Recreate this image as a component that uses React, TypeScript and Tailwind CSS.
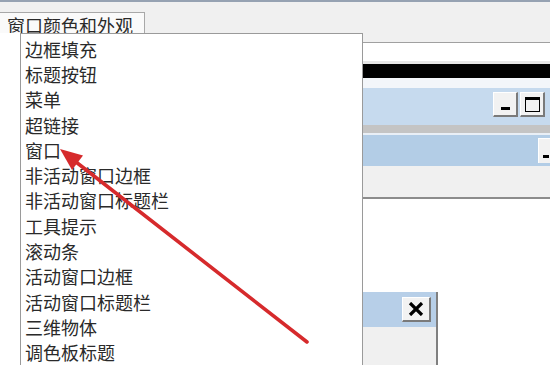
import React from "react";

const items = [
  "边框填充",
  "标题按钮",
  "菜单",
  "超链接",
  "窗口",
  "非活动窗口边框",
  "非活动窗口标题栏",
  "工具提示",
  "滚动条",
  "活动窗口边框",
  "活动窗口标题栏",
  "三维物体",
  "调色板标题",
];

function Btn({ children, w = "w-[25px]" }: { children: React.ReactNode; w?: string }) {
  return (
    <div
      className={`${w} h-[25px] bg-[#f2f2f2] border-t border-l border-t-white border-l-white border-r-2 border-b-2 border-r-[#7a7a7a] border-b-[#7a7a7a] flex items-center justify-center`}
    >
      {children}
    </div>
  );
}

export default function App() {
  return (
    <div className="relative w-[550px] h-[365px] overflow-hidden bg-white font-['Noto_Sans_CJK_SC','Microsoft_YaHei',sans-serif] text-[#2a2a2a]">
      {/* top frame line */}
      <div className="h-[2px] bg-[#96a2b2]" />
      {/* tab strip */}
      <div className="h-[31px] bg-[#f0f0f0] pt-[10px]">
        <div className="w-[145px] h-[21px] bg-[#fafafa] border-t border-r border-[#a8a8a8] pl-[7px] pt-[4px] text-[18px] leading-[16px] whitespace-nowrap overflow-visible">
          窗口颜色和外观
        </div>
      </div>
      {/* body */}
      <div className="relative flex h-[332px]">
        <div className="w-[20px] bg-white" />
        {/* dropdown list */}
        <div className="w-[343px] bg-white border-t border-l border-r border-[#9a9a9a] pt-[2px] pl-[4px]">
          {items.map((t) => (
            <div key={t} className="h-[25.3px] flex items-center text-[18px] leading-[18px] whitespace-nowrap">
              {t}
            </div>
          ))}
        </div>
        {/* preview area */}
        <div className="flex-1 flex flex-col">
          <div className="h-[9px] bg-[#f0f0f0]" />
          <div className="h-[1px] bg-[#a0a0a0]" />
          <div className="h-[18px] bg-white" />
          <div className="h-[3px] bg-[#e6e6e6]" />
          <div className="h-[14px] bg-black" />
          <div className="h-[10px] bg-[#f3f6fa]" />
          <div className="h-[37px] bg-[#c6daee] flex items-center justify-end gap-[2px] pr-[5px] pb-[4px]">
            <Btn>
              <div className="w-[9px] h-[3px] bg-black mt-[9px]" />
            </Btn>
            <Btn>
              <div className="w-[15px] h-[15px] border border-t-[3px] border-black" />
            </Btn>
          </div>
          <div className="h-[8px] bg-[#c4c4c4]" />
          <div className="h-[2px] bg-[#e9eff6]" />
          <div className="h-[31px] bg-[#b3cde6] flex items-center justify-end">
            <div className="w-[12px] h-[25px] bg-[#f2f2f2] border-t border-l border-t-white border-l-white flex items-end pb-[5px]">
              <div className="w-[6px] h-[3px] bg-black ml-[4px]" />
            </div>
          </div>
          <div className="h-[31px] bg-[#f0f0f0]" />
          <div className="h-[2px] bg-[#8c8c8c]" />
          <div className="h-[93px] bg-white" />
          {/* small window panel */}
          <div className="w-[75px] flex-1 border-r-2 border-[#808080] flex flex-col">
            <div className="h-[35px] bg-[#b7cfe8] flex items-center justify-end pr-[5px]">
              <Btn w="w-[29px]">
                <svg width="16" height="14" viewBox="0 0 16 14">
                  <path d="M2 1 L14 13 M14 1 L2 13" stroke="black" strokeWidth="3.2" strokeLinecap="butt" />
                </svg>
              </Btn>
            </div>
            <div className="flex-1 bg-[#f0f0f0]" />
          </div>
        </div>
      </div>
      {/* red arrow annotation */}
      <svg className="absolute left-0 top-0 pointer-events-none" width="550" height="365" viewBox="0 0 550 365">
        <line x1="307" y1="342" x2="76" y2="162" stroke="#d62a2c" strokeWidth="3.6" strokeLinecap="round" />
        <polygon points="60,149 83,155.5 72,170" fill="#d62a2c" />
      </svg>
    </div>
  );
}
